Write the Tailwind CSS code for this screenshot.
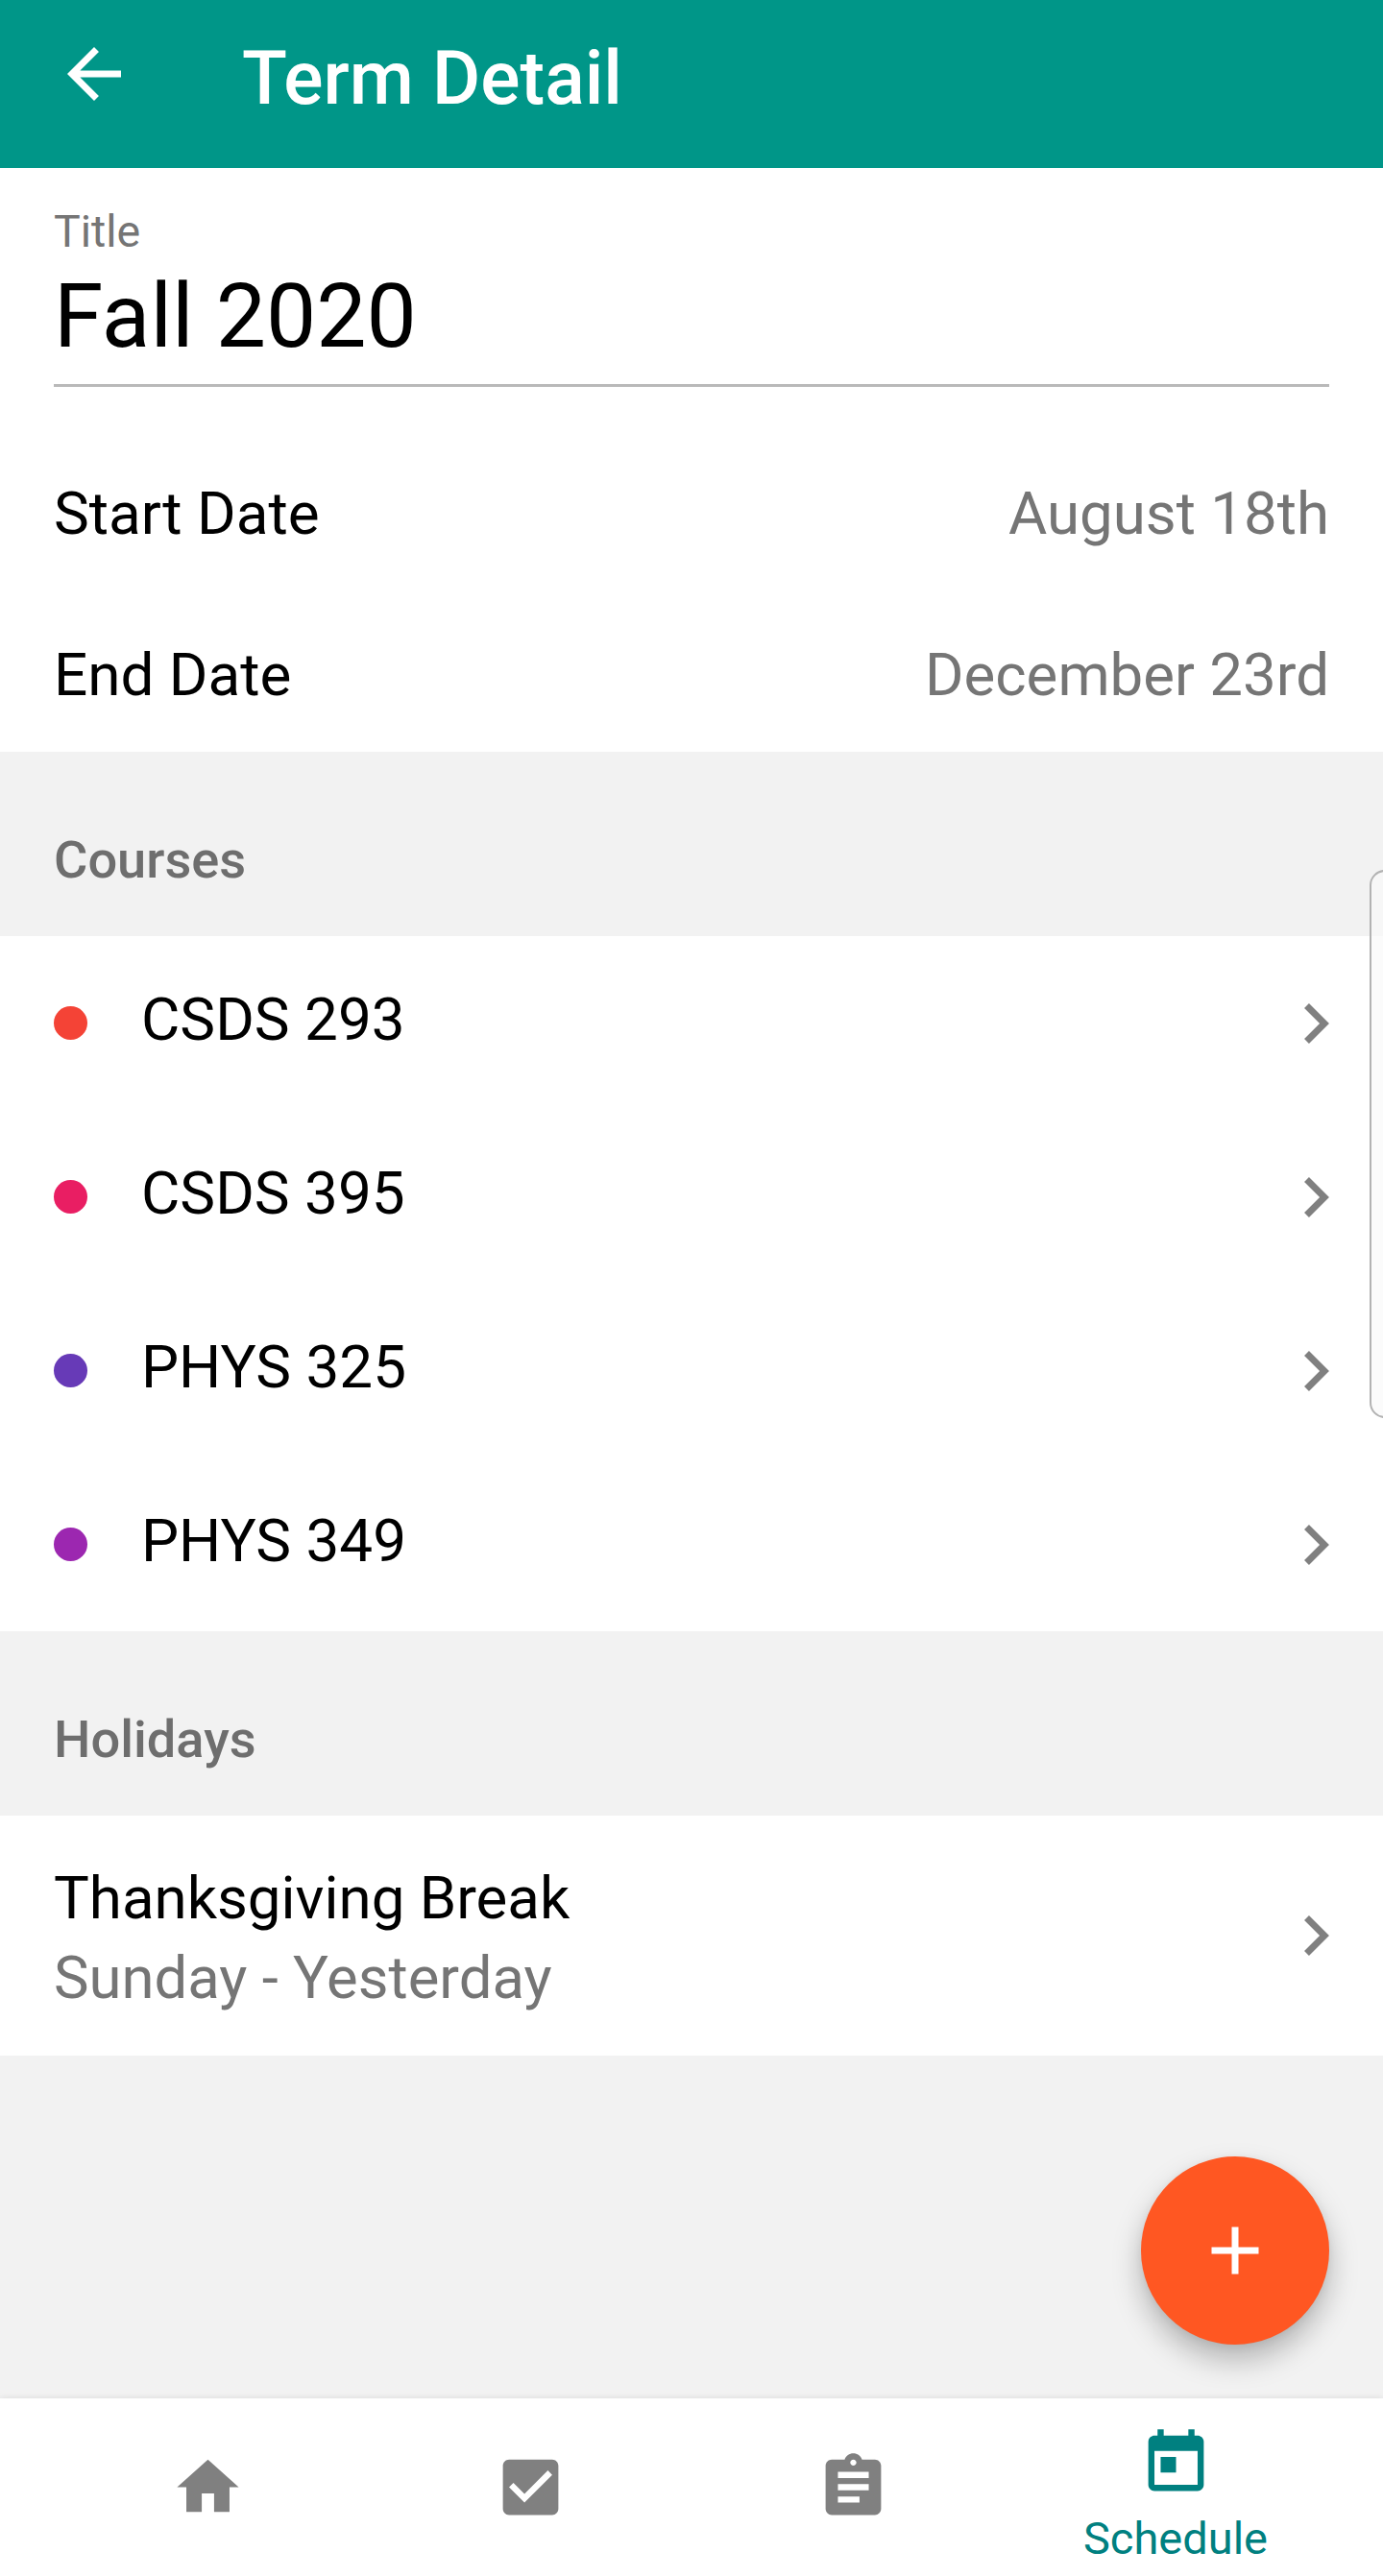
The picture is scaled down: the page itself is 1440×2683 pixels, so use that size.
<!DOCTYPE html>
<html lang="en">
<head>
<meta charset="utf-8">
<title>Term Detail</title>
<script src="https://cdn.jsdelivr.net/npm/@tailwindcss/browser@4"></script>
</head>
<body class="bg-[#f2f2f2]">
<div class="relative flex h-[2683px] w-[1440px] flex-col overflow-hidden bg-[#f2f2f2] font-['Roboto',sans-serif] text-[62px] leading-[84px] text-black">

  <header class="flex h-[175px] shrink-0 items-start bg-[#009688] px-14 pt-[35px] text-white">
    <svg class="size-[84px] shrink-0" viewBox="0 0 24 24" fill="currentColor"><path d="M20 11H7.83l5.59-5.59L12 4l-8 8 8 8 1.41-1.41L7.83 13H20v-2z"/></svg>
    <h1 class="ml-28 pt-[5px] text-[77px] leading-[84px] font-medium">Term Detail</h1>
  </header>

  <section class="h-[608px] shrink-0 bg-white px-14">
    <label class="block pt-[39px] text-[46.5px] leading-[54px] text-[#757575]">Title</label>
    <div class="flex h-[135px] items-start border-b-[3px] border-[#b9b9b9] pt-[8px] text-[93px] leading-[108px]">Fall 2020</div>
    <div class="mt-[90px] flex h-[84px] justify-between"><span>Start Date</span><span class="text-[61.8px] text-[#757575]">August 18th</span></div>
    <div class="mt-[84px] flex h-[84px] justify-between"><span>End Date</span><span class="text-[61.8px] text-[#757575]">December 23rd</span></div>
  </section>

  <h2 class="h-[192px] shrink-0 px-14 pt-[81px] text-[54.2px] leading-[64px] font-medium text-[#6e6e6e]">Courses</h2>

  <ul class="shrink-0 bg-white">
    <li class="flex h-[181px] items-center px-14"><span class="size-[35px] rounded-full bg-[#f44336]"></span><span class="ml-14 flex-1 pb-[8px]">CSDS 293</span><svg class="h-[42px] w-[26px]" viewBox="8.59 6 7.41 12" fill="#808080"><path d="M10 6L8.59 7.41 13.17 12l-4.58 4.59L10 18l6-6z"/></svg></li>
    <li class="flex h-[181px] items-center px-14"><span class="size-[35px] rounded-full bg-[#e91e63]"></span><span class="ml-14 flex-1 pb-[8px]">CSDS 395</span><svg class="h-[42px] w-[26px]" viewBox="8.59 6 7.41 12" fill="#808080"><path d="M10 6L8.59 7.41 13.17 12l-4.58 4.59L10 18l6-6z"/></svg></li>
    <li class="flex h-[181px] items-center px-14"><span class="size-[35px] rounded-full bg-[#673ab7]"></span><span class="ml-14 flex-1 pb-[8px]">PHYS 325</span><svg class="h-[42px] w-[26px]" viewBox="8.59 6 7.41 12" fill="#808080"><path d="M10 6L8.59 7.41 13.17 12l-4.58 4.59L10 18l6-6z"/></svg></li>
    <li class="flex h-[181px] items-center px-14"><span class="size-[35px] rounded-full bg-[#9c27b0]"></span><span class="ml-14 flex-1 pb-[8px]">PHYS 349</span><svg class="h-[42px] w-[26px]" viewBox="8.59 6 7.41 12" fill="#808080"><path d="M10 6L8.59 7.41 13.17 12l-4.58 4.59L10 18l6-6z"/></svg></li>
  </ul>

  <h2 class="h-[192px] shrink-0 px-14 pt-[81px] text-[54.2px] leading-[64px] font-medium text-[#6e6e6e]">Holidays</h2>

  <div class="flex h-[250px] shrink-0 items-center bg-white px-14">
    <div class="flex-1 pt-[6px] text-[61.8px] leading-[83px]">
      <div>Thanksgiving Break</div>
      <div class="text-[61.6px] text-[#757575]">Sunday - Yesterday</div>
    </div>
    <svg class="h-[42px] w-[26px]" viewBox="8.59 6 7.41 12" fill="#808080"><path d="M10 6L8.59 7.41 13.17 12l-4.58 4.59L10 18l6-6z"/></svg>
  </div>

  <button class="absolute top-[2246px] left-[1188px] flex size-[196px] items-center justify-center rounded-full bg-[#ff5722] text-white shadow-[0_16px_30px_rgba(0,0,0,0.26),0_2px_10px_rgba(0,0,0,0.06)]">
    <svg class="size-[84px]" viewBox="0 0 24 24" fill="currentColor"><path d="M19 13h-6v6h-2v-6H5v-2h6V5h2v6h6v2z"/></svg>
  </button>

  <nav class="relative mt-auto flex h-[185px] shrink-0 bg-white px-12 text-[#808080] shadow-[0_0_7px_rgba(0,0,0,0.1)]">
    <a class="flex flex-1 flex-col items-center pt-[54px]"><svg class="size-[77px]" viewBox="0 0 24 24" fill="currentColor"><path d="M10 20v-6h4v6h5v-8h3L12 3 2 12h3v8z"/></svg></a>
    <a class="flex flex-1 flex-col items-center pt-[54px]"><svg class="size-[77px]" viewBox="0 0 24 24" fill="currentColor"><path d="M19 3H5c-1.11 0-2 .9-2 2v14c0 1.1.89 2 2 2h14c1.11 0 2-.9 2-2V5c0-1.1-.89-2-2-2zm-9 14l-5-5 1.41-1.41L10 14.17l7.59-7.59L19 8l-9 9z"/></svg></a>
    <a class="flex flex-1 flex-col items-center pt-[54px]"><svg class="size-[77px]" viewBox="0 0 24 24" fill="currentColor"><path d="M19 3h-4.18C14.4 1.84 13.3 1 12 1c-1.3 0-2.4.84-2.82 2H5c-1.1 0-2 .9-2 2v14c0 1.1.9 2 2 2h14c1.1 0 2-.9 2-2V5c0-1.1-.9-2-2-2zm-7 0c.55 0 1 .45 1 1s-.45 1-1 1-1-.45-1-1 .45-1 1-1zm2 14H7v-2h7v2zm3-4H7v-2h10v2zm0-4H7V7h10v2z"/></svg></a>
    <a class="flex flex-1 flex-col items-center pt-[29px] text-[47px] leading-[54px] text-[#008080]"><svg class="size-[77px]" viewBox="0 0 24 24" fill="currentColor"><path d="M19 3h-1V1h-2v2H8V1H6v2H5c-1.11 0-1.99.9-1.99 2L3 19c0 1.1.89 2 2 2h14c1.1 0 2-.9 2-2V5c0-1.1-.9-2-2-2zm0 16H5V8h14v11zM7 10h5v5H7z"/></svg><span class="pt-[13px]">Schedule</span></a>
  </nav>

  <div class="absolute top-[906px] left-[1426px] h-[571px] w-[40px] rounded-[16px] border-2 border-[#b3b3b3] bg-[#fafafa]/70"></div>
</div>
</body>
</html>
